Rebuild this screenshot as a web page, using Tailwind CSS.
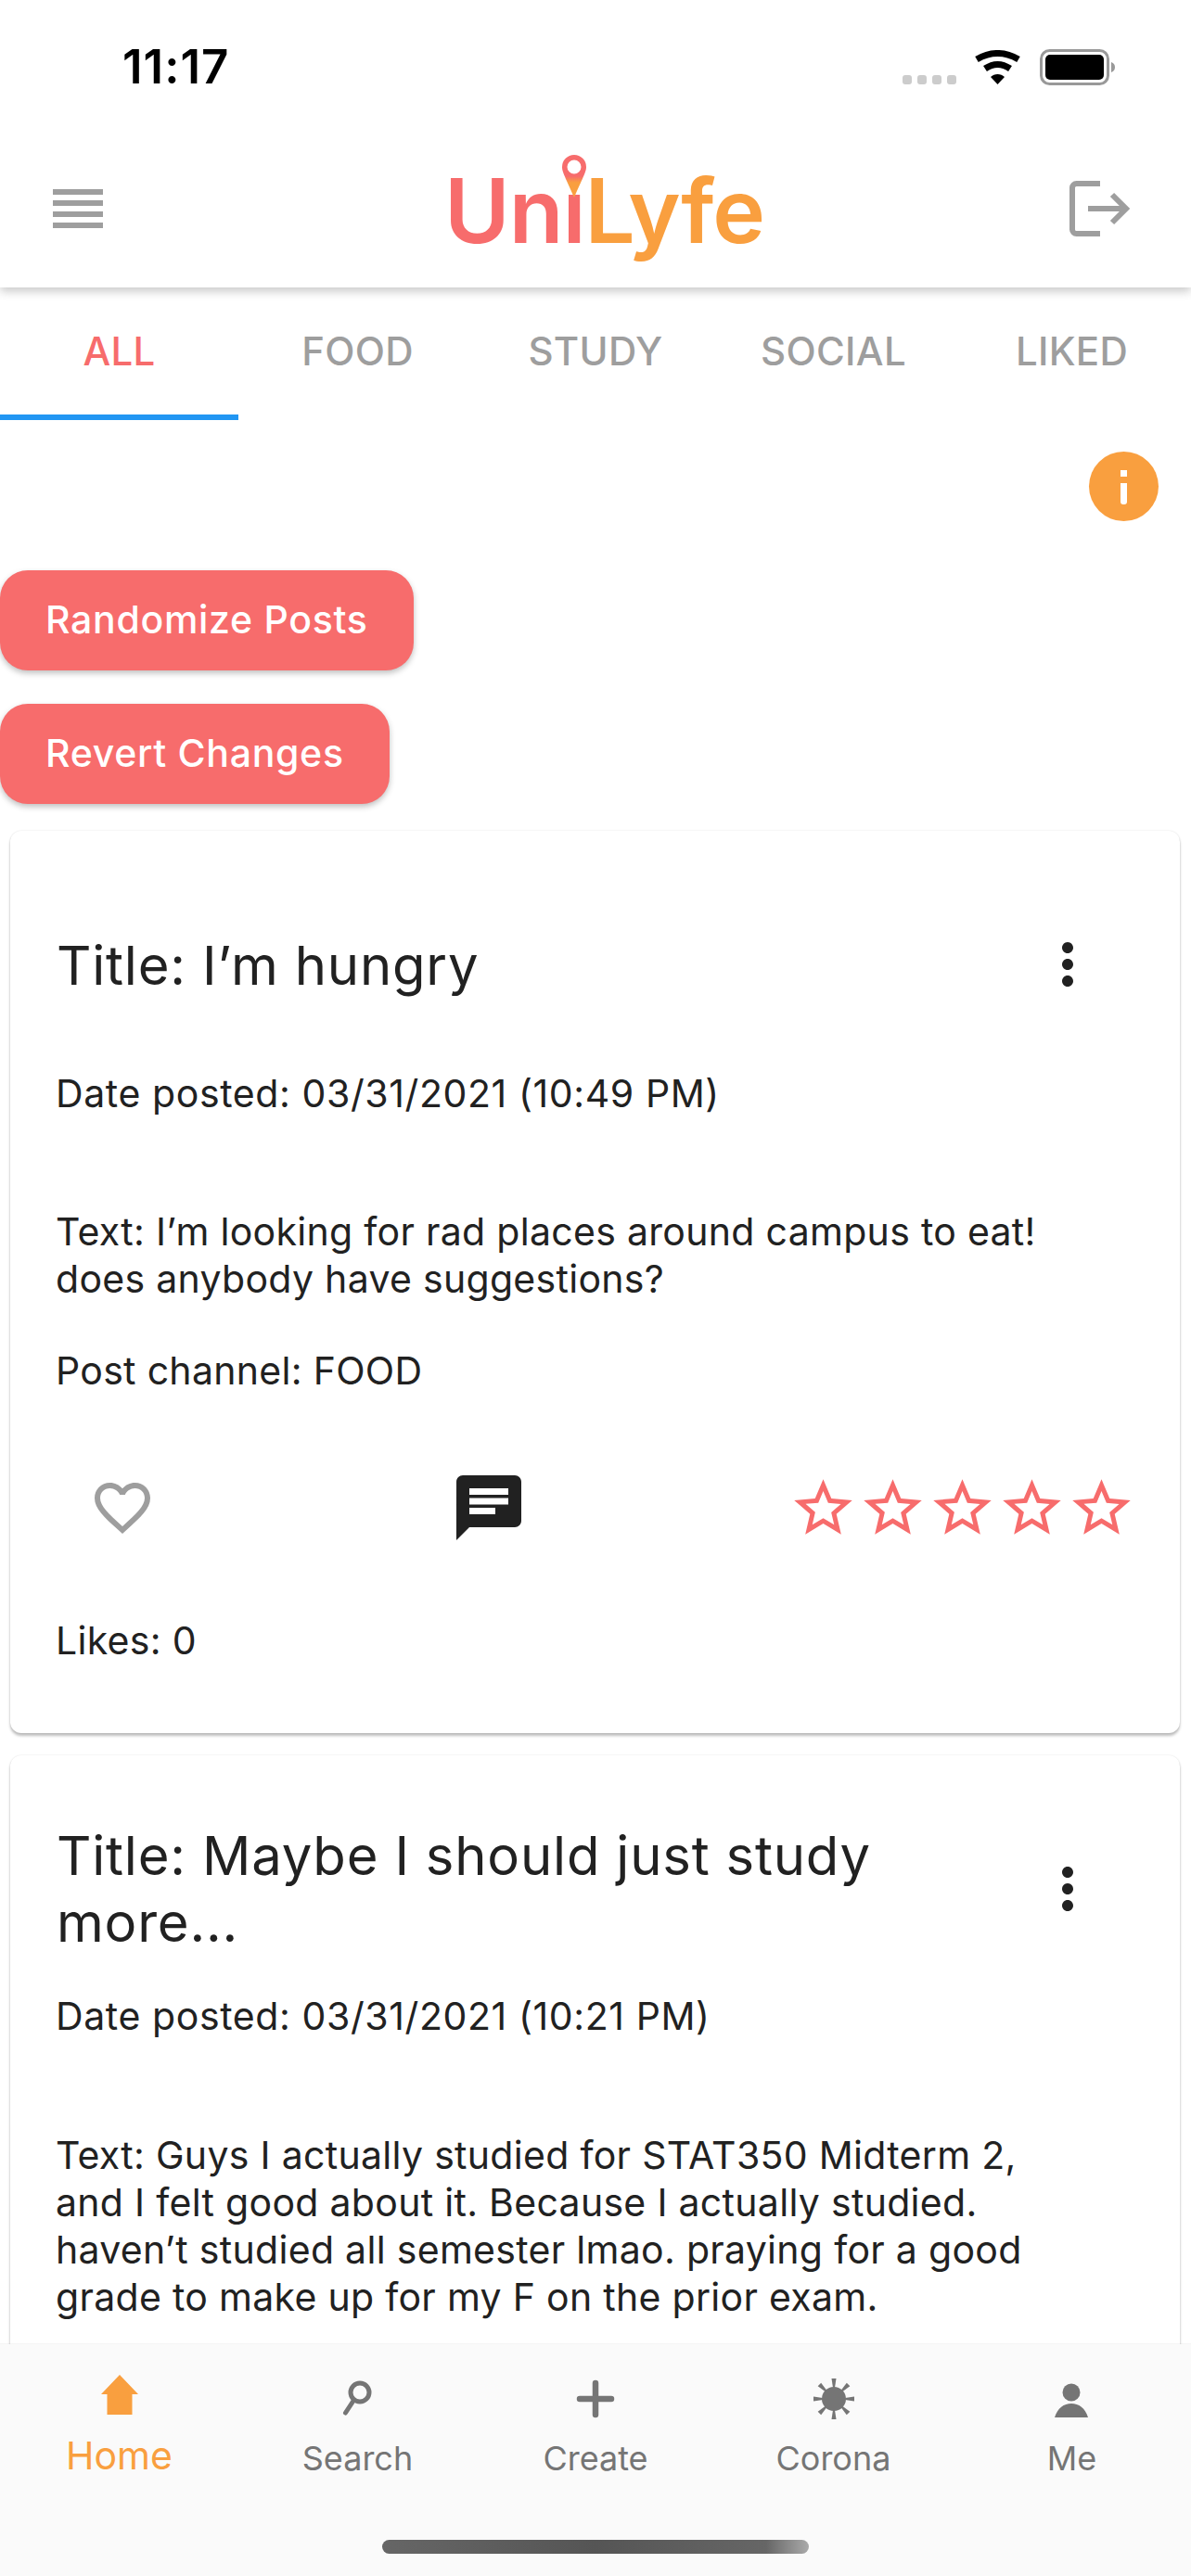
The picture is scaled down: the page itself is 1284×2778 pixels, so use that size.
<!DOCTYPE html>
<html lang="en">

<head>
    <meta charset="UTF-8">
    <meta name="viewport" content="width=device-width, initial-scale=1.0">
    <title>UniLyfe</title>
    <script src="https://cdn.jsdelivr.net/npm/@tailwindcss/browser@4"></script>
</head>

<body class="bg-white">
    <svg class="hidden">
        <symbol id="star" viewBox="0 0 24 24">
            <path fill="#F76C6C" d="M22 9.24l-7.19-.62L12 2 9.19 8.63 2 9.24l5.46 4.73L5.82 21 12 17.27 18.18 21l-1.63-7.03L22 9.24zM12 15.4l-3.76 2.27 1-4.28-3.32-2.88 4.38-.38L12 6.1l1.71 4.04 4.38.38-3.32 2.88 1 4.28L12 15.4z" />
        </symbol>
        <symbol id="more" viewBox="0 0 24 24">
            <path fill="#212121" d="M12 8c1.1 0 2-.9 2-2s-.9-2-2-2-2 .9-2 2 .9 2 2 2zm0 2c-1.1 0-2 .9-2 2s.9 2 2 2 2-.9 2-2-.9-2-2-2zm0 6c-1.1 0-2 .9-2 2s.9 2 2 2 2-.9 2-2-.9-2-2-2z" />
        </symbol>
    </svg>

    <div class="w-[1284px] h-[2778px] flex flex-col overflow-hidden font-['Inter',sans-serif] text-[#212121]">

        <!-- status bar + app bar -->
        <header class="relative z-10 shrink-0 bg-white shadow-[0_4px_10px_rgba(0,0,0,0.22)]">
            <div class="h-[150px] flex items-start">
                <span class="ml-[132px] mt-[42px] w-[114px] text-[51px] leading-[60px] font-semibold text-black tracking-[1px]">11:17</span>
                <div class="ml-[727px] mt-[81px] flex gap-[6px]">
                    <div class="w-[10px] h-[10px] rounded-[3px] bg-[#ccc]"></div>
                    <div class="w-[10px] h-[10px] rounded-[3px] bg-[#ccc]"></div>
                    <div class="w-[10px] h-[10px] rounded-[3px] bg-[#ccc]"></div>
                    <div class="w-[10px] h-[10px] rounded-[3px] bg-[#ccc]"></div>
                </div>
                <svg class="ml-[19px] mt-[54px]" width="51" height="37" viewBox="0 0 51 37">
                    <path d="M3 10Q25.500 -3 48 10" fill="none" stroke="#000" stroke-width="7" />
                    <path d="M12 20Q25.500 11 39 20" fill="none" stroke="#000" stroke-width="7" />
                    <path d="M25.500 37L18 29C22 25 29 25 33 29Z" fill="#000" />
                </svg>
                <svg class="ml-[20px] mt-[53px]" width="83" height="39" viewBox="0 0 83 39">
                    <rect x="1.500" y="1.500" width="72" height="36" rx="9" fill="none" stroke="#999" stroke-width="3" />
                    <rect x="6" y="6" width="63" height="27" rx="5" fill="#000" />
                    <path d="M77 14C80 15 81 17 81 19.500C81 22 80 24 77 25Z" fill="#999" />
                </svg>
            </div>
            <div class="h-[160px] flex items-center pb-[10px]">
                <div class="ml-[57px] flex flex-col gap-[6px]">
                    <div class="w-[54px] h-[6px] bg-[#9e9e9e]"></div>
                    <div class="w-[54px] h-[6px] bg-[#9e9e9e]"></div>
                    <div class="w-[54px] h-[6px] bg-[#9e9e9e]"></div>
                    <div class="w-[54px] h-[6px] bg-[#9e9e9e]"></div>
                </div>
                <div class="relative ml-[368px] w-[344px] pt-[3px] text-[96px] leading-[110px] font-semibold tracking-[-1px] whitespace-nowrap">
                    <span class="text-[#F76C6C]">Unı</span><span class="text-[#F99F3F]">Lyfe</span>
                    <svg class="absolute left-[127px] top-[-2px]" width="26" height="46" viewBox="0 0 26 46">
                        <defs>
                            <linearGradient id="pin" x1="0" y1="0" x2="0" y2="1">
                                <stop offset="0.5" stop-color="#F76C6C" />
                                <stop offset="0.65" stop-color="#F99F3F" />
                            </linearGradient>
                        </defs>
                        <path fill="url(#pin)" fill-rule="evenodd" d="M13 0A13 13 0 0 1 26 13C26 18 24 21 13 46C2 21 0 18 0 13A13 13 0 0 1 13 0ZM13 5.500A7.500 7.500 0 1 0 13 20.500A7.500 7.500 0 1 0 13 5.500Z" />
                    </svg>
                </div>
                <svg class="ml-[330px]" width="66" height="60" viewBox="0 0 66 60">
                    <path d="M33 3H7.500A4.500 4.500 0 0 0 3 7.500V52.500A4.500 4.500 0 0 0 7.500 57H33" fill="none" stroke="#9e9e9e" stroke-width="6" />
                    <path d="M20 30H61M46 15L61 30L46 45" fill="none" stroke="#9e9e9e" stroke-width="6" />
                </svg>
            </div>
        </header>

        <!-- feed -->
        <main class="flex-1 min-h-0 overflow-hidden">
            <nav class="flex h-[143px] text-[42px] font-medium text-[#9e9e9e] tracking-[0.3px]">
                <div class="w-[257px] flex items-center justify-center border-b-[6px] border-[#2196F3] text-[#F76C6C]">ALL</div>
                <div class="w-[257px] flex items-center justify-center pb-[6px]">FOOD</div>
                <div class="w-[256px] flex items-center justify-center pb-[6px]">STUDY</div>
                <div class="w-[257px] flex items-center justify-center pb-[6px]">SOCIAL</div>
                <div class="w-[257px] flex items-center justify-center pb-[6px]">LIKED</div>
            </nav>

            <div class="mt-[34px] flex justify-end pr-[35px]">
                <div class="w-[75px] h-[75px] rounded-full bg-[#F99F3F] flex flex-col items-center pt-[20px] gap-[7px]">
                    <div class="w-[7px] h-[7px] bg-white"></div>
                    <div class="w-[7px] h-[23px] rounded-b-[3px] bg-white"></div>
                </div>
            </div>

            <div class="mt-[53px] flex flex-col items-start gap-[36px]">
                <button class="h-[108px] px-[49px] rounded-[30px] bg-[#F76C6C] text-white text-[41px] tracking-[0.7px] font-medium shadow-[0_3px_6px_rgba(0,0,0,0.25)]">Randomize Posts</button>
                <button class="h-[108px] px-[49px] rounded-[30px] bg-[#F76C6C] text-white text-[41px] tracking-[0.7px] font-medium shadow-[0_3px_6px_rgba(0,0,0,0.25)]">Revert Changes</button>
            </div>

            <section class="mt-[29px] flex flex-col gap-[24px] text-[41px] leading-[51px] tracking-[0.3px]">
                <article class="mx-[11px] w-[1261px] h-[973px] pt-[72px] rounded-[12px] bg-white shadow-[0_3px_3px_rgba(0,0,0,0.25),0_0_2px_rgba(0,0,0,0.12)]">
                    <div class="pl-[50px] pr-[85px] flex items-center min-h-[144px]">
                        <h2 class="flex-1 mt-[2px] text-[58px] leading-[72px] tracking-[0.8px] font-normal">Title: I’m hungry</h2>
                        <svg width="72" height="72"><use href="#more" /></svg>
                    </div>
                    <div class="pl-[49px] pr-[140px]">
                        <p class="mt-[42px] tracking-[0.6px]">Date posted: 03/31/2021 (10:49 PM)</p>
                        <p class="mt-[98px]">Text: I’m looking for rad places around campus to eat! does anybody have suggestions?</p>
                        <p class="mt-[48px]">Post channel: FOOD</p>
                    </div>
                    <div class="mt-[80px] flex items-center h-[84px]">
                        <svg class="ml-[85px]" width="72" height="72" viewBox="0 0 24 24">
                            <path fill="#9e9e9e" d="M16.500 3c-1.740 0-3.410.810-4.500 2.090C10.910 3.810 9.240 3 7.500 3 4.420 3 2 5.420 2 8.500c0 3.780 3.400 6.860 8.550 11.540L12 21.350l1.450-1.320C18.600 15.360 22 12.280 22 8.500 22 5.420 19.580 3 16.500 3zm-4.400 15.550l-.1.100-.1-.1C7.140 14.240 4 11.390 4 8.500 4 6.500 5.500 5 7.500 5c1.540 0 3.040.990 3.570 2.360h1.870C13.460 5.990 14.960 5 16.500 5c2 0 3.500 1.500 3.500 3.500 0 2.890-3.140 5.740-7.900 10.050z" />
                        </svg>
                        <svg class="ml-[317px]" width="84" height="84" viewBox="0 0 24 24">
                            <path fill="#212121" d="M20 2H4c-1.100 0-1.990.900-1.990 2L2 22l4-4h14c1.100 0 2-.900 2-2V4c0-1.100-.900-2-2-2zM6 9h12v2H6V9zm8 5H6v-2h8v2zm4-6H6V6h12v2z" />
                        </svg>
                        <div class="ml-[281px] flex">
                            <svg width="75" height="75"><use href="#star" /></svg>
                            <svg width="75" height="75"><use href="#star" /></svg>
                            <svg width="75" height="75"><use href="#star" /></svg>
                            <svg width="75" height="75"><use href="#star" /></svg>
                            <svg width="75" height="75"><use href="#star" /></svg>
                        </div>
                    </div>
                    <p class="mt-[76px] pl-[49px]">Likes: 0</p>
                </article>

                <article class="mx-[11px] w-[1261px] h-[973px] pt-[72px] rounded-[12px] bg-white shadow-[0_3px_3px_rgba(0,0,0,0.25),0_0_2px_rgba(0,0,0,0.12)]">
                    <div class="pl-[50px] pr-[85px] flex items-center min-h-[144px]">
                        <h2 class="flex-1 pr-[120px] text-[58px] leading-[72px] tracking-[0.8px] font-normal">Title: Maybe I should just study more...</h2>
                        <svg width="72" height="72"><use href="#more" /></svg>
                    </div>
                    <div class="pl-[49px] pr-[140px]">
                        <p class="mt-[40px] tracking-[0.6px]">Date posted: 03/31/2021 (10:21 PM)</p>
                        <p class="mt-[99px]">Text: Guys I actually studied for STAT350 Midterm 2, and I felt good about it. Because I actually studied. haven’t studied all semester lmao. praying for a good grade to make up for my F on the prior exam.</p>
                    </div>
                </article>
            </section>
        </main>

        <!-- bottom tab bar -->
        <footer class="relative z-10 shrink-0 h-[250px] bg-[#fafafa] pt-[27px] shadow-[0_-1px_1px_rgba(0,0,0,0.04)]">
            <div class="flex h-[157px] text-[36px] text-[#757575]">
                <div class="w-[257px] flex flex-col items-center">
                    <svg width="72" height="60" viewBox="0 0 72 60">
                        <path fill="#F99F3F" d="M36 6L56 27H49.500V49H22.500V27H16Z" />
                    </svg>
                    <span class="mt-[8px] text-[41px] leading-[50px] text-[#F99F3F]">Home</span>
                </div>
                <div class="w-[257px] flex flex-col items-center">
                    <svg width="72" height="60" viewBox="0 0 72 60">
                        <circle cx="38" cy="25" r="10" fill="none" stroke="#757575" stroke-width="5" />
                        <path d="M31 34L22.500 47" fill="none" stroke="#757575" stroke-width="5" stroke-linecap="round" />
                    </svg>
                    <span class="mt-[11px] leading-[50px]">Search</span>
                </div>
                <div class="w-[256px] flex flex-col items-center">
                    <svg width="72" height="60" viewBox="0 0 72 60">
                        <path d="M36 15V49M19 32H53" fill="none" stroke="#757575" stroke-width="6.500" stroke-linecap="round" />
                    </svg>
                    <span class="mt-[11px] leading-[50px]">Create</span>
                </div>
                <div class="w-[257px] flex flex-col items-center">
                    <svg width="72" height="60" viewBox="0 0 72 60">
                        <circle cx="36" cy="32" r="13" fill="#757575" />
                        <g fill="#757575">
                            <path d="M35 20H37L38.500 10H33.500Z" />
                            <path d="M35 20H37L38.500 10H33.500Z" transform="rotate(45 36 32)" />
                            <path d="M35 20H37L38.500 10H33.500Z" transform="rotate(90 36 32)" />
                            <path d="M35 20H37L38.500 10H33.500Z" transform="rotate(135 36 32)" />
                            <path d="M35 20H37L38.500 10H33.500Z" transform="rotate(180 36 32)" />
                            <path d="M35 20H37L38.500 10H33.500Z" transform="rotate(225 36 32)" />
                            <path d="M35 20H37L38.500 10H33.500Z" transform="rotate(270 36 32)" />
                            <path d="M35 20H37L38.500 10H33.500Z" transform="rotate(315 36 32)" />
                        </g>
                    </svg>
                    <span class="mt-[11px] leading-[50px]">Corona</span>
                </div>
                <div class="w-[257px] flex flex-col items-center">
                    <svg width="72" height="60" viewBox="0 0 72 60">
                        <circle cx="35" cy="25" r="9.500" fill="#757575" />
                        <path fill="#757575" d="M17 52C20 42 27 37 35 37C43 37 50 42 53 52Z" />
                    </svg>
                    <span class="mt-[11px] leading-[50px]">Me</span>
                </div>
            </div>
            <div class="mx-auto mt-[27px] w-[460px] h-[15px] rounded-full bg-[linear-gradient(90deg,#666_0%,#555_50%,#666_90%,#aaa_100%)]"></div>
        </footer>
    </div>
</body>

</html>
